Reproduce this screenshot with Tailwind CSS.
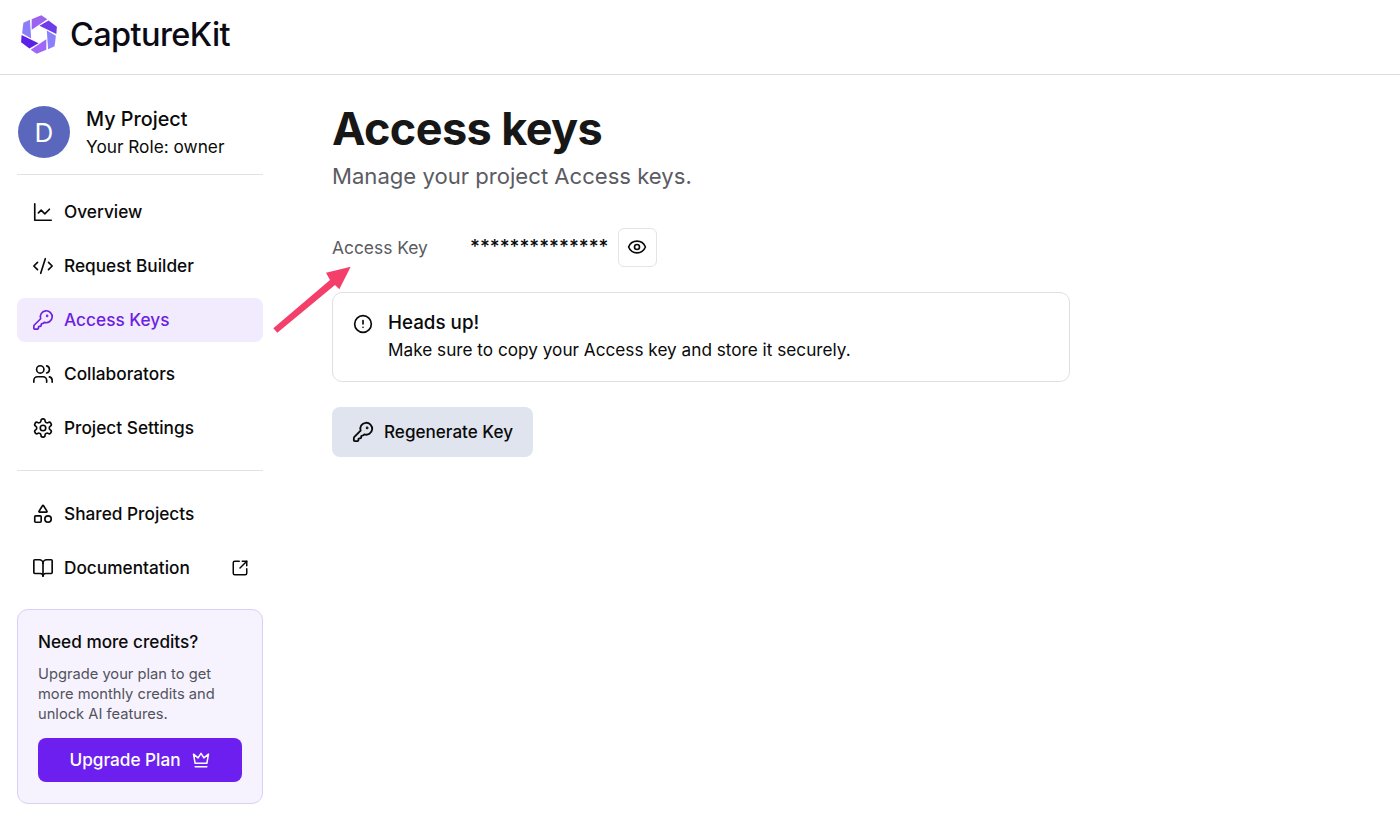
<!DOCTYPE html>
<html lang="en">

<head>
    <meta charset="UTF-8">
    <meta name="viewport" content="width=device-width, initial-scale=1.0">
    <title>Access keys</title>
    <script src="https://cdn.jsdelivr.net/npm/@tailwindcss/browser@4"></script>
</head>

<body class="bg-white font-['Inter',sans-serif] text-[#0a0a0a] h-[821px] overflow-hidden relative">
    <!-- Header -->
    <header class="h-[75px] border-b border-[#dcdcdf] flex items-center pl-[21px] gap-[13px]">
        <svg class="w-[36px] h-[39px] -mt-[5px]" viewBox="-18 -19.5 36 39">
            <polygon fill="#9a63f0" points="-7.3,-15.3 2.3,-19.3 8.3,-15.3 -7.3,-4.8" />
            <polygon fill="#6d3be8" points="-7.3,-15.3 2.3,-19.3 8.3,-15.3 -7.3,-4.8" transform="rotate(60)" />
            <polygon fill="#8a80fa" points="-7.3,-15.3 2.3,-19.3 8.3,-15.3 -7.3,-4.8" transform="rotate(120)" />
            <polygon fill="#a066f5" points="-7.3,-15.3 2.3,-19.3 8.3,-15.3 -7.3,-4.8" transform="rotate(180)" />
            <polygon fill="#5b21e6" points="-7.3,-15.3 2.3,-19.3 8.3,-15.3 -7.3,-4.8" transform="rotate(240)" />
            <polygon fill="#8b7ff8" points="-7.3,-15.3 2.3,-19.3 8.3,-15.3 -7.3,-4.8" transform="rotate(300)" />
        </svg>
        <span class="text-[32.5px] font-medium tracking-[-0.6px] text-[#0c0a14] -mt-[4px]">CaptureKit</span>
    </header>

    <div class="flex">
        <!-- Sidebar -->
        <aside class="w-[246px] ml-[17px] shrink-0 pt-[30px]">
            <div class="flex items-center gap-[16px] pl-[1px] pb-[15px] border-b border-[#e2e2e5]">
                <div class="w-[52px] h-[52px] rounded-full bg-[#5a67bd] text-white text-[26px] flex items-center justify-center">D</div>
                <div>
                    <div class="text-[19.8px] font-medium leading-[28px]">My Project</div>
                    <div class="text-[17.25px] leading-[26px] mt-[1px] -mb-[1px]">Your Role: owner</div>
                </div>
            </div>

            <nav class="pt-[15px] flex flex-col gap-[10px] pb-[20px] border-b border-[#e2e2e5]">
                <a class="h-[44px] flex items-center gap-[10px] pl-[15px] rounded-lg text-[17.25px] font-medium">
                    <svg class="w-[22px] h-[22px]" viewBox="0 0 24 24" fill="none" stroke="currentColor" stroke-width="1.8" stroke-linecap="round" stroke-linejoin="round"><path d="M3 3v18h18" /><path d="m19 9-5 5-4-4-3 3" /></svg>
                    Overview
                </a>
                <a class="h-[44px] flex items-center gap-[10px] pl-[15px] rounded-lg text-[17.25px] font-medium">
                    <svg class="w-[22px] h-[22px]" viewBox="0 0 24 24" fill="none" stroke="currentColor" stroke-width="1.8" stroke-linecap="round" stroke-linejoin="round"><path d="m18 16 4-4-4-4" /><path d="m6 8-4 4 4 4" /><path d="m14.5 4-5 16" /></svg>
                    Request Builder
                </a>
                <a class="h-[44px] flex items-center gap-[10px] pl-[15px] rounded-lg text-[17.25px] font-medium bg-[#f1ebfd] text-[#6d1fe0]">
                    <svg class="w-[22px] h-[22px]" viewBox="0 0 24 24" fill="none" stroke="currentColor" stroke-width="1.8" stroke-linecap="round" stroke-linejoin="round"><path d="M2.586 17.414A2 2 0 0 0 2 18.828V21a1 1 0 0 0 1 1h3a1 1 0 0 0 1-1v-1a1 1 0 0 1 1-1h1a1 1 0 0 0 1-1v-1a1 1 0 0 1 1-1h.172a2 2 0 0 0 1.414-.586l.814-.814a6.5 6.5 0 1 0-4-4z" /><circle cx="16.5" cy="7.5" r=".5" fill="currentColor" /></svg>
                    Access Keys
                </a>
                <a class="h-[44px] flex items-center gap-[10px] pl-[15px] rounded-lg text-[17.25px] font-medium">
                    <svg class="w-[22px] h-[22px]" viewBox="0 0 24 24" fill="none" stroke="currentColor" stroke-width="1.8" stroke-linecap="round" stroke-linejoin="round"><path d="M16 21v-2a4 4 0 0 0-4-4H6a4 4 0 0 0-4 4v2" /><circle cx="9" cy="7" r="4" /><path d="M22 21v-2a4 4 0 0 0-3-3.87" /><path d="M16 3.13a4 4 0 0 1 0 7.75" /></svg>
                    Collaborators
                </a>
                <a class="h-[44px] flex items-center gap-[10px] pl-[15px] rounded-lg text-[17.25px] font-medium">
                    <svg class="w-[22px] h-[22px]" viewBox="0 0 24 24" fill="none" stroke="currentColor" stroke-width="1.8" stroke-linecap="round" stroke-linejoin="round"><path d="M12.22 2h-.44a2 2 0 0 0-2 2v.18a2 2 0 0 1-1 1.73l-.43.25a2 2 0 0 1-2 0l-.15-.08a2 2 0 0 0-2.73.73l-.22.38a2 2 0 0 0 .73 2.73l.15.1a2 2 0 0 1 1 1.72v.51a2 2 0 0 1-1 1.74l-.15.09a2 2 0 0 0-.73 2.73l.22.38a2 2 0 0 0 2.73.73l.15-.08a2 2 0 0 1 2 0l.43.25a2 2 0 0 1 1 1.73V20a2 2 0 0 0 2 2h.44a2 2 0 0 0 2-2v-.18a2 2 0 0 1 1-1.73l.43-.25a2 2 0 0 1 2 0l.15.08a2 2 0 0 0 2.73-.73l.22-.39a2 2 0 0 0-.73-2.73l-.15-.08a2 2 0 0 1-1-1.74v-.5a2 2 0 0 1 1-1.74l.15-.09a2 2 0 0 0 .73-2.73l-.22-.38a2 2 0 0 0-2.73-.73l-.15.08a2 2 0 0 1-2 0l-.43-.25a2 2 0 0 1-1-1.73V4a2 2 0 0 0-2-2z" /><circle cx="12" cy="12" r="3" /></svg>
                    Project Settings
                </a>
            </nav>

            <div class="pt-[21px] flex flex-col gap-[10px]">
                <a class="h-[44px] flex items-center gap-[10px] pl-[15px] rounded-lg text-[17.25px] font-medium">
                    <svg class="w-[22px] h-[22px]" viewBox="0 0 24 24" fill="none" stroke="currentColor" stroke-width="1.8" stroke-linecap="round" stroke-linejoin="round"><path d="M8.3 10a.7.7 0 0 1-.626-1.079L11.4 3a.7.7 0 0 1 1.198-.043L16.3 8.9a.7.7 0 0 1-.572 1.1Z" /><rect x="3" y="14" width="7" height="7" rx="1" /><circle cx="17.5" cy="17.5" r="3.5" /></svg>
                    Shared Projects
                </a>
                <a class="h-[44px] flex items-center gap-[10px] pl-[15px] pr-[14px] rounded-lg text-[17.25px] font-medium">
                    <svg class="w-[22px] h-[22px]" viewBox="0 0 24 24" fill="none" stroke="currentColor" stroke-width="1.8" stroke-linecap="round" stroke-linejoin="round"><path d="M12 7v14" /><path d="M3 18a1 1 0 0 1-1-1V4a1 1 0 0 1 1-1h5a4 4 0 0 1 4 4 4 4 0 0 1 4-4h5a1 1 0 0 1 1 1v13a1 1 0 0 1-1 1h-6a3 3 0 0 0-3 3 3 3 0 0 0-3-3z" /></svg>
                    Documentation
                    <svg class="w-[18px] h-[18px] ml-auto" viewBox="0 0 24 24" fill="none" stroke="currentColor" stroke-width="2" stroke-linecap="round" stroke-linejoin="round"><path d="M21 13v6a2 2 0 0 1-2 2H5a2 2 0 0 1-2-2V5a2 2 0 0 1 2-2h6" /><path d="m21 3-9 9" /><path d="M15 3h6v6" /></svg>
                </a>
            </div>

            <!-- Upgrade card -->
            <div class="mt-[19px] h-[195px] rounded-[11px] border border-[#d9d0f5] bg-[#f6f3fe] pt-[20px] px-[20px]">
                <div class="text-[17.2px] font-medium leading-[24px]">Need more credits?</div>
                <p class="mt-[10px] text-[14.7px] leading-[20px] text-[#52525b]">Upgrade your plan to get more monthly credits and unlock AI features.</p>
                <button class="mt-[14px] w-full h-[44px] rounded-lg bg-[#6d1ff0] text-white text-[17.2px] font-medium flex items-center justify-center gap-[10px]">
                    Upgrade Plan
                    <svg class="w-[20px] h-[20px]" viewBox="0 0 24 24" fill="none" stroke="currentColor" stroke-width="1.8" stroke-linecap="round" stroke-linejoin="round"><path d="M5 16 3 5l5.5 4.500L12 4l3.500 5.500L21 5l-2 11z" /><path d="M5 20h14" /></svg>
                </button>
            </div>
        </aside>

        <!-- Content -->
        <main class="pl-[69px] pt-[24px] w-[807px]">
            <h1 class="text-[45px] font-bold leading-[60px] tracking-[-0.6px] text-[#171717]">Access keys</h1>
            <p class="text-[22.1px] leading-[32px] mt-[1px] text-[#5b5b63]">Manage your project Access keys.</p>

            <div class="mt-[36px] flex items-center h-[39px]">
                <span class="w-[138px] text-[17.4px] text-[#5b5b63] mt-[1px]">Access Key</span>
                <span class="text-[19px] font-medium w-[148px]">**************</span>
                <button class="w-[39px] h-[39px] rounded-md border border-[#e4e4e7] flex items-center justify-center pr-[1px] pb-[1px]">
                    <svg class="w-[20px] h-[20px]" viewBox="0 0 24 24" fill="none" stroke="currentColor" stroke-width="2" stroke-linecap="round" stroke-linejoin="round"><path d="M2.062 12.348a1 1 0 0 1 0-.696 10.75 10.75 0 0 1 19.876 0 1 1 0 0 1 0 .696 10.75 10.75 0 0 1-19.876 0" /><circle cx="12" cy="12" r="3" /></svg>
                </button>
            </div>

            <div class="mt-[25px] h-[90px] rounded-[10px] border border-[#e0e0e3] flex pl-[20px] pt-[17px] gap-[15px]">
                <svg class="w-[20px] h-[20px] mt-[4px]" viewBox="0 0 24 24" fill="none" stroke="currentColor" stroke-width="2" stroke-linecap="round" stroke-linejoin="round"><circle cx="12" cy="12" r="10" /><path d="M12 8v4" /><path d="M12 16h.01" /></svg>
                <div>
                    <div class="text-[18.8px] font-medium leading-[26px]">Heads up!</div>
                    <div class="text-[17.2px] leading-[28px]">Make sure to copy your Access key and store it securely.</div>
                </div>
            </div>

            <button class="mt-[25px] w-[201px] h-[50px] rounded-lg bg-[#e0e4ee] flex items-center justify-center gap-[10px] text-[17.1px] font-medium">
                <svg class="w-[22px] h-[22px]" viewBox="0 0 24 24" fill="none" stroke="currentColor" stroke-width="2" stroke-linecap="round" stroke-linejoin="round"><path d="M2.586 17.414A2 2 0 0 0 2 18.828V21a1 1 0 0 0 1 1h3a1 1 0 0 0 1-1v-1a1 1 0 0 1 1-1h1a1 1 0 0 0 1-1v-1a1 1 0 0 1 1-1h.172a2 2 0 0 0 1.414-.586l.814-.814a6.5 6.5 0 1 0-4-4z" /><circle cx="16.5" cy="7.5" r=".5" fill="currentColor" /></svg>
                Regenerate Key
            </button>
        </main>
    </div>

    <!-- Annotation arrow -->
    <svg class="absolute left-[270px] top-[262px] w-[85px] h-[75px]" viewBox="270 262 85 75">
        <polygon fill="#f43f6b" points="273.3,328.3 330,280 326,272.7 350.7,266.7 339.3,289.3 335,285 277.3,332.7" />
    </svg>
</body>

</html>
